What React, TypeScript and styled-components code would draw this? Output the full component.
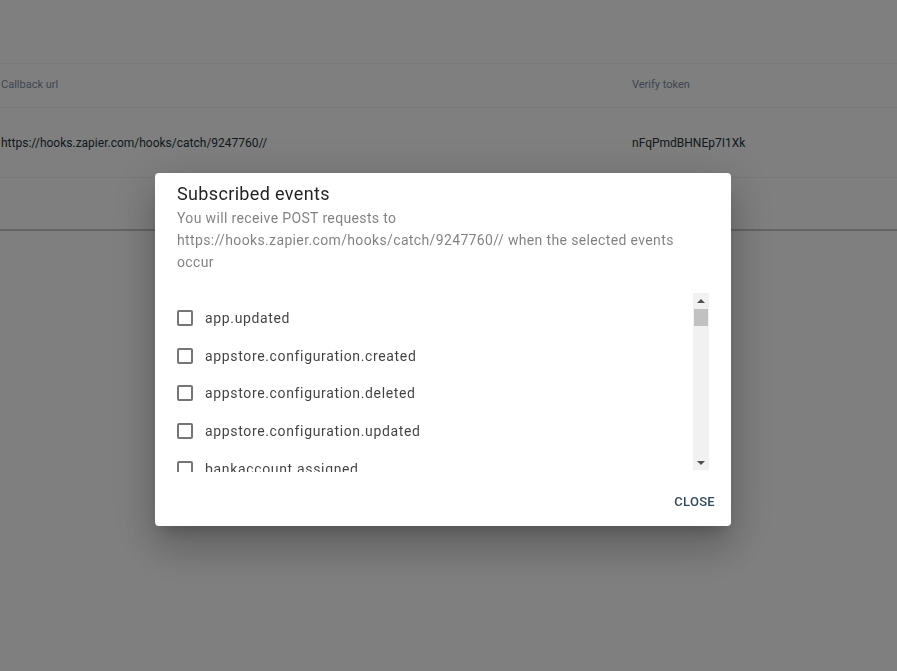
import styled, { createGlobalStyle } from "styled-components";

const GlobalStyle = createGlobalStyle`
  html, body {
    margin: 0;
    padding: 0;
    background: #ffffff;
    font-family: Roboto, "Liberation Sans", sans-serif;
  }
`;

const events = [
  "app.updated",
  "appstore.configuration.created",
  "appstore.configuration.deleted",
  "appstore.configuration.updated",
  "bankaccount.assigned",
  "bankaccount.created",
  "bankaccount.deleted",
  "bankaccount.unassigned",
  "bankaccount.updated",
  "calendar.created",
  "calendar.deleted",
  "calendar.updated",
  "contact.created",
  "contact.deleted",
  "contact.updated",
  "customer.created",
  "customer.deleted",
  "customer.updated",
  "document.created",
  "document.deleted",
  "document.updated",
  "invoice.created",
  "invoice.deleted",
  "invoice.paid",
  "invoice.updated",
  "order.created",
  "order.deleted",
  "order.updated",
];

const Page = styled.div`
  padding-top: 63px;
`;

const Table = styled.div`
  border-bottom: 2px solid #c9c9c9;
`;

const Row = styled.div<{ $height: number }>`
  display: grid;
  grid-template-columns: 631px 1fr;
  align-items: center;
  height: ${(p) => p.$height}px;
  border-top: 1px solid #f1f1f1;
  box-sizing: border-box;
`;

const HeadCell = styled.div`
  font-size: 11px;
  color: #7d8ca3;
  padding-left: 1px;
  margin-top: -2px;
`;

const Cell = styled.div`
  font-size: 12px;
  color: #263238;
  padding-left: 1px;
`;

const Overlay = styled.div`
  position: fixed;
  inset: 0;
  background: rgba(0, 0, 0, 0.5);
  display: flex;
  align-items: center;
  justify-content: center;
  padding: 28px 11px 0 0;
`;

const Dialog = styled.div`
  width: 576px;
  height: 353px;
  background: #ffffff;
  border-radius: 4px;
  box-shadow: 0 11px 15px -7px rgba(0, 0, 0, 0.2), 0 24px 38px 3px rgba(0, 0, 0, 0.14),
    0 9px 46px 8px rgba(0, 0, 0, 0.12);
  display: flex;
  flex-direction: column;
  padding: 8px 22px 7px;
  box-sizing: border-box;
`;

const Title = styled.h2`
  margin: 0;
  font-size: 18px;
  font-weight: 400;
  line-height: 26px;
  letter-spacing: 0.35px;
  color: rgba(0, 0, 0, 0.87);
`;

const Description = styled.p`
  margin: 0;
  font-size: 14px;
  line-height: 22px;
  letter-spacing: 0.36px;
  color: rgba(0, 0, 0, 0.5);
`;

const ListArea = styled.div`
  margin-top: 19px;
  height: 180px;
  display: flex;
`;

const EventList = styled.div`
  flex: 1;
  overflow: hidden;
  padding-top: 7px;
  box-sizing: border-box;
`;

const EventRow = styled.label`
  display: flex;
  align-items: center;
  gap: 12px;
  height: 37.7px;
  font-size: 14px;
  letter-spacing: 0.65px;
  color: rgba(0, 0, 0, 0.75);
  cursor: pointer;
`;

const Box = styled.span`
  width: 16px;
  height: 16px;
  border: 2px solid #757575;
  border-radius: 2px;
  box-sizing: border-box;
  flex: none;
`;

const ScrollTrack = styled.div`
  width: 16px;
  margin: 1px 0 2px;
  background: #f1f1f1;
  display: flex;
  flex-direction: column;
  align-items: center;
`;

const Arrow = styled.div<{ $down?: boolean }>`
  height: 15px;
  width: 100%;
  display: flex;
  align-items: center;
  justify-content: center;
  &::before {
    content: "";
    border-left: 4px solid transparent;
    border-right: 4px solid transparent;
    ${(p) => (p.$down ? "border-top: 4px solid #505050;" : "border-bottom: 4px solid #505050;")}
  }
`;

const Thumb = styled.div`
  width: 14px;
  height: 17px;
  margin-top: 1px;
  background: #c1c1c1;
`;

const Spacer = styled.div`
  flex: 1;
`;

const Actions = styled.div`
  margin-top: auto;
  display: flex;
  justify-content: flex-end;
  margin-right: -14px;
`;

const CloseButton = styled.button`
  border: none;
  background: transparent;
  height: 36px;
  padding: 0 8px;
  font-family: Roboto, "Liberation Sans", sans-serif;
  font-size: 13px;
  font-weight: 500;
  letter-spacing: 0.3px;
  color: #34495e;
  text-transform: uppercase;
  cursor: pointer;
`;

const App = () => {
  return (
    <>
      <GlobalStyle />
      <Page>
        <Table>
          <Row $height={44}>
            <HeadCell>Callback url</HeadCell>
            <HeadCell>Verify token</HeadCell>
          </Row>
          <Row $height={70}>
            <Cell>https://hooks.zapier.com/hooks/catch/9247760//</Cell>
            <Cell>nFqPmdBHNEp7I1Xk</Cell>
          </Row>
          <Row $height={52} />
        </Table>
      </Page>
      <Overlay>
        <Dialog>
          <Title>Subscribed events</Title>
          <Description>
            You will receive POST requests to https://hooks.zapier.com/hooks/catch/9247760// when the
            selected events occur
          </Description>
          <ListArea>
            <EventList>
              {events.map((name) => (
                <EventRow key={name}>
                  <Box />
                  {name}
                </EventRow>
              ))}
            </EventList>
            <ScrollTrack>
              <Arrow />
              <Thumb />
              <Spacer />
              <Arrow $down />
            </ScrollTrack>
          </ListArea>
          <Actions>
            <CloseButton>Close</CloseButton>
          </Actions>
        </Dialog>
      </Overlay>
    </>
  );
};

export default App;
